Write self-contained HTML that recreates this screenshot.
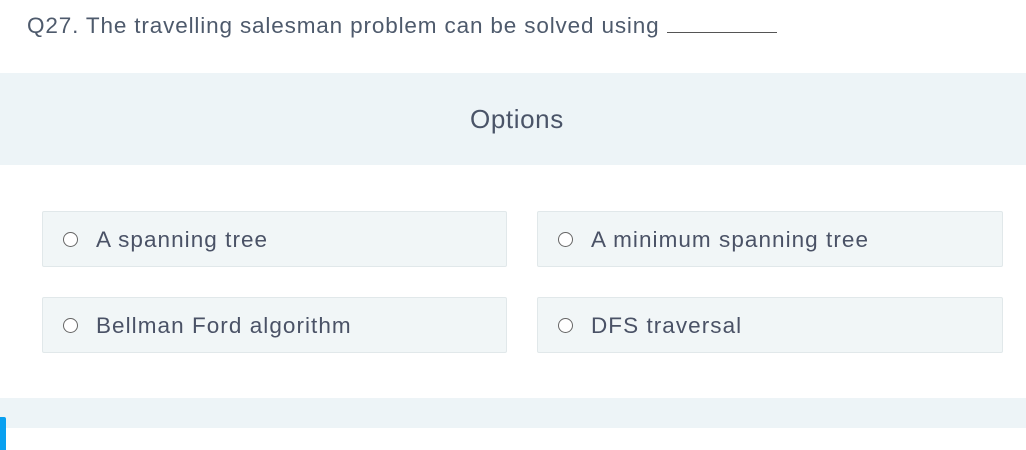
<!DOCTYPE html>
<html><head><style>
body{margin:0;width:1026px;height:450px;background:#fff;position:relative;overflow:hidden;font-family:"Liberation Sans",sans-serif;color:#4a5468}
.q{position:absolute;left:27px;top:13px;font-size:22.5px;letter-spacing:0.85px;color:#4e5a6c;white-space:nowrap}
.band{position:absolute;left:0;width:1026px;background:#edf4f7}
.opt{position:absolute;background:#f1f6f7;border:1px solid #e1e8ea;border-radius:2px;box-sizing:border-box}
.opt .r{position:absolute;left:20px;top:20px;width:15px;height:15px;border:1.5px solid #666;border-radius:50%;box-sizing:border-box;background:#fff}
.opt span{position:absolute;left:53px;top:15px;font-size:22.5px;letter-spacing:1.05px;color:#4a5266;white-space:nowrap}
</style></head><body>
<div class="q">Q27. The travelling salesman problem can be solved using <span style="display:inline-block;width:110px;border-bottom:1px solid #555;vertical-align:baseline"></span></div>
<div class="band" style="top:73px;height:92px"></div>
<div style="position:absolute;left:0;width:1026px;top:104px;text-align:center;font-size:26px;letter-spacing:0.6px;color:#4a5468">&nbsp;Options</div>
<div class="opt" style="left:42px;top:211px;width:465px;height:56px"><div class="r"></div><span>A spanning tree</span></div>
<div class="opt" style="left:537px;top:211px;width:466px;height:56px"><div class="r"></div><span>A minimum spanning tree</span></div>
<div class="opt" style="left:42px;top:297px;width:465px;height:56px"><div class="r"></div><span>Bellman Ford algorithm</span></div>
<div class="opt" style="left:537px;top:297px;width:466px;height:56px"><div class="r"></div><span>DFS traversal</span></div>
<div class="band" style="top:398px;height:30px"></div>
<div style="position:absolute;left:0;top:417px;width:6px;height:33px;background:#0aa0f0;border-radius:0 2px 0 0"></div>
</body></html>
